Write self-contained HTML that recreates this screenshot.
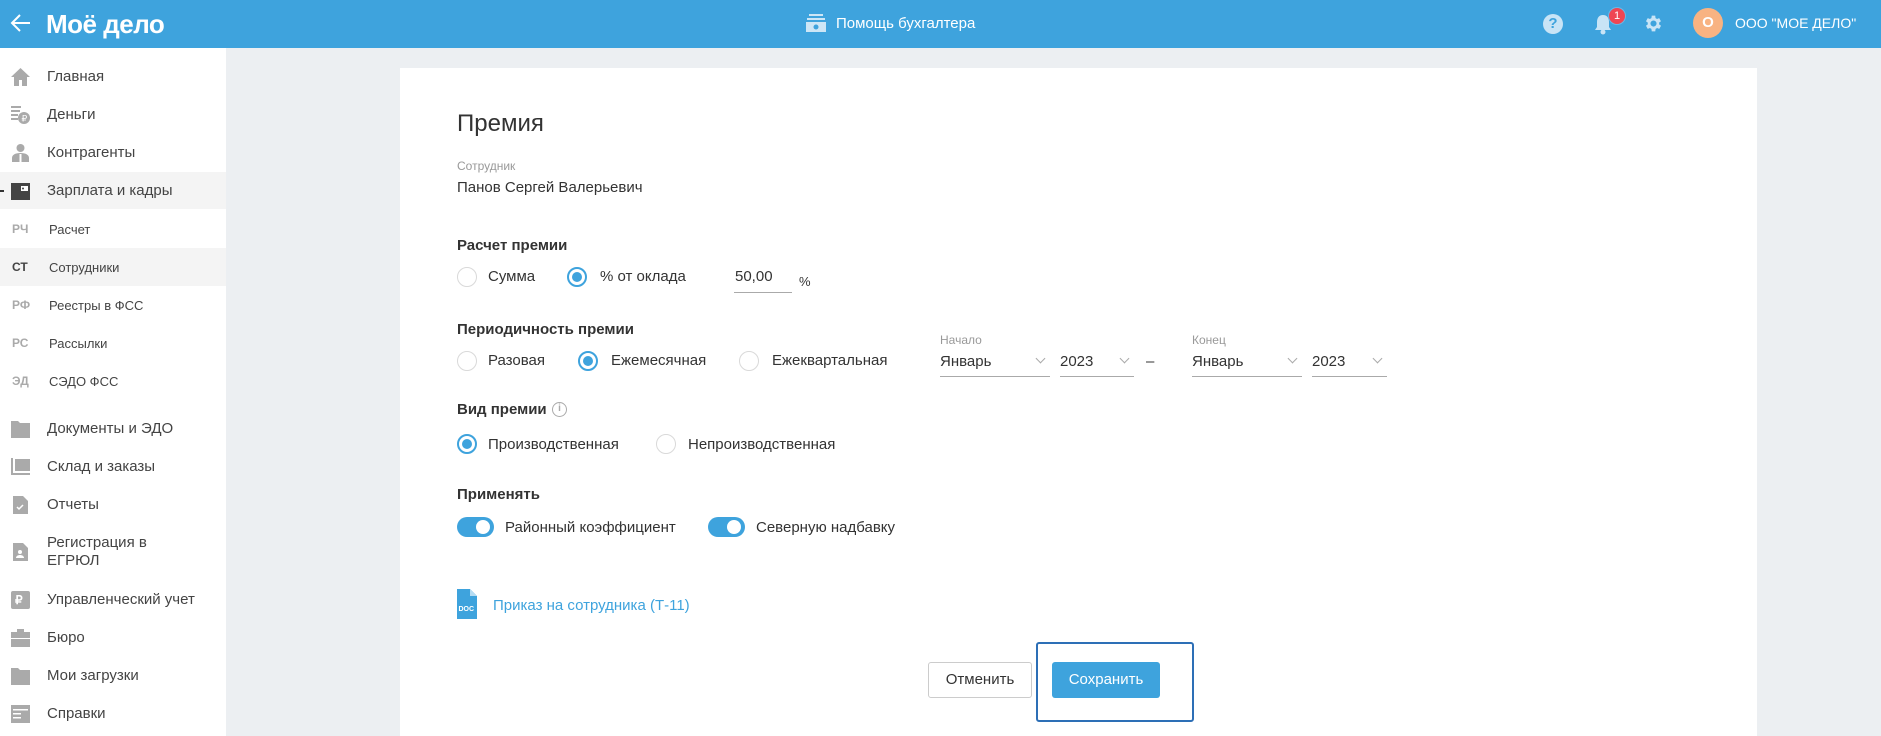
<!DOCTYPE html>
<html><head><meta charset="utf-8"><style>
*{margin:0;padding:0;box-sizing:border-box}
html,body{width:1881px;height:736px;overflow:hidden}
body{background:#eceff2;font-family:"Liberation Sans",sans-serif;color:#333;position:relative}
.hdr{position:absolute;left:0;top:0;width:1881px;height:48px;background:#3ea3dd;color:#fff}
.abs{position:absolute}
.side{position:absolute;left:0;top:48px;width:226px;height:688px;background:#fff}
.it{position:absolute;left:47px;font-size:15px;color:#444;line-height:18px}
.ic{position:absolute;left:10px;width:21px;height:20px}
.sub{position:absolute;left:12px;font-size:12px;font-weight:bold;color:#aaa}
.subt{position:absolute;left:49px;font-size:13px;color:#444}
.card{position:absolute;left:400px;top:68px;width:1357px;height:668px;background:#fff}
.t{position:absolute;white-space:nowrap;line-height:1}
.rad{position:absolute;width:20px;height:20px;border-radius:50%;border:1px solid #d9d9d9;background:#fff}
.rad.on{border:2px solid #3ea3dd}
.rad.on:after{content:"";position:absolute;left:3px;top:3px;width:10px;height:10px;border-radius:50%;background:#3ea3dd}
.b{font-weight:bold;font-size:15px;color:#333}
.f{font-size:15px;color:#333}
.sel{position:absolute;height:30px;border-bottom:1px solid #aaa;font-size:15px;color:#333}
.sel span{position:absolute;left:0;top:6px}
.sel i{position:absolute;right:6px;top:8px;width:7px;height:7px;border-right:1.5px solid #aaa;border-bottom:1.5px solid #aaa;transform:rotate(45deg)}
.tg{position:absolute;width:37px;height:20px;border-radius:10px;background:#3ea3dd}
.tg:after{content:"";position:absolute;right:4px;top:3px;width:14px;height:14px;border-radius:50%;background:#fff}
</style></head><body>
<div class="hdr">
 <svg class="abs" style="left:10px;top:13px" width="22" height="20" viewBox="0 0 22 20"><path d="M20 10H2M10 2L2 10l8 8" stroke="#fff" stroke-width="2" fill="none"/></svg>
 <div class="t" style="left:46px;top:11px;font-size:26px;font-weight:bold;letter-spacing:-0.5px">Моё дело</div>
 <svg class="abs" style="left:806px;top:14px" width="20" height="18" viewBox="0 0 20 18"><rect x="3" y="0" width="14" height="2" fill="#cde6f6"/><rect x="1" y="4" width="18" height="2" fill="#cde6f6"/><rect x="0" y="8" width="20" height="10" fill="#cde6f6"/><circle cx="10" cy="13" r="2.5" fill="#3ea3dd"/></svg>
 <div class="t" style="left:836px;top:16px;font-size:15px">Помощь бухгалтера</div>
 <div class="abs" style="left:1543px;top:14px;width:20px;height:20px;border-radius:50%;background:#c8e4f6;color:#3ea3dd;font-weight:bold;font-size:15px;text-align:center;line-height:20px">?</div>
 <svg class="abs" style="left:1594px;top:13px" width="18" height="22" viewBox="0 0 18 22"><path d="M9 2c-4 0-6 3-6 7v5l-2 3h16l-2-3V9c0-4-2-7-6-7z" fill="#c8e4f6"/><circle cx="9" cy="19" r="2.5" fill="#c8e4f6"/></svg>
 <div class="abs" style="left:1609px;top:8px;width:16px;height:16px;border-radius:50%;background:#ef4653;font-size:11px;text-align:center;line-height:16px;box-shadow:0 0 0 1px #6ab8e6">1</div>
 <svg class="abs" style="left:1643px;top:13px" width="21" height="21" viewBox="0 0 24 24"><path fill="#c8e4f6" d="M19.4 13a7.5 7.5 0 000-2l2.1-1.6-2-3.5-2.5 1a7 7 0 00-1.7-1L15 3h-4l-.4 2.9a7 7 0 00-1.7 1l-2.5-1-2 3.5L6.5 11a7.5 7.5 0 000 2l-2.1 1.6 2 3.5 2.5-1a7 7 0 001.7 1L11 21h4l.4-2.9a7 7 0 001.7-1l2.5 1 2-3.5zM13 15.5a3.5 3.5 0 110-7 3.5 3.5 0 010 7z" transform="translate(-1 0)"/></svg>
 <div class="abs" style="left:1693px;top:8px;width:30px;height:30px;border-radius:50%;background:#f8b382;font-weight:bold;font-size:15px;text-align:center;line-height:30px">О</div>
 <div class="t" style="left:1735px;top:16px;font-size:14px">ООО "МОЕ ДЕЛО"</div>
</div>
<div class="side">
 <div class="abs" style="left:0;top:124px;width:226px;height:37px;background:#f4f4f4"></div>
 <div class="abs" style="left:0;top:200px;width:226px;height:38px;background:#f4f4f4"></div>
 <div class="abs" style="left:0;top:142px;width:4px;height:1.5px;background:#333"></div>
 <svg class="ic" style="top:19px" viewBox="0 0 21 20"><path d="M10.5 1L1 10h3v9h5v-6h3v6h5v-9h3z" fill="#aaa"/></svg>
 <svg class="ic" style="top:57px" viewBox="0 0 21 20"><rect x="1" y="1" width="10" height="2" fill="#aaa"/><rect x="1" y="5" width="9" height="2" fill="#aaa"/><rect x="1" y="9" width="7" height="2" fill="#aaa"/><rect x="1" y="13" width="7" height="2" fill="#aaa"/><circle cx="14" cy="13" r="6" fill="#aaa"/><text x="11.5" y="16.5" font-size="9" fill="#fff" font-family="Liberation Sans">₽</text></svg>
 <svg class="ic" style="top:95px" viewBox="0 0 21 20"><circle cx="10.5" cy="5" r="4" fill="#aaa"/><path d="M2 19v-4c0-3 3-5 8.5-5s8.5 2 8.5 5v4z" fill="#aaa"/><rect x="9.5" y="11" width="2" height="8" fill="#fff"/></svg>
 <svg class="ic" style="top:133px" viewBox="0 0 21 20"><rect x="1" y="2" width="19" height="17" fill="#444"/><rect x="11" y="5" width="7" height="5" fill="#fff"/><circle cx="13" cy="7.5" r="1" fill="#444"/></svg>
 <svg class="ic" style="top:371px" viewBox="0 0 21 20"><path d="M1 2h7l2 2h10v15H1z" fill="#aaa"/></svg>
 <svg class="ic" style="top:409px" viewBox="0 0 21 20"><path d="M1 1h2v15h17v2H1z" fill="#aaa"/><rect x="5" y="2" width="15" height="12" fill="#aaa"/></svg>
 <svg class="ic" style="top:447px" viewBox="0 0 21 20"><path d="M3 1h10l5 5v13H3z" fill="#aaa"/><path d="M7 12l2 2 4-4" stroke="#fff" stroke-width="1.5" fill="none"/></svg>
 <svg class="ic" style="top:494px" viewBox="0 0 21 20"><path d="M3 1h10l5 5v13H3z" fill="#aaa"/><circle cx="10" cy="10" r="2" fill="#fff"/><path d="M6 16c0-2 2-3 4-3s4 1 4 3z" fill="#fff"/></svg>
 <svg class="ic" style="top:542px" viewBox="0 0 21 20"><rect x="1" y="1" width="19" height="18" rx="2" fill="#aaa"/><text x="5" y="14" font-size="12" font-weight="bold" fill="#fff" font-family="Liberation Sans">₽</text></svg>
 <svg class="ic" style="top:580px" viewBox="0 0 21 20"><rect x="7" y="1" width="7" height="3" fill="#aaa"/><rect x="1" y="4" width="19" height="6" fill="#aaa"/><rect x="1" y="11" width="19" height="8" fill="#aaa"/></svg>
 <svg class="ic" style="top:618px" viewBox="0 0 21 20"><path d="M1 2h7l2 2h10v15H1z" fill="#aaa"/></svg>
 <svg class="ic" style="top:656px" viewBox="0 0 21 20"><rect x="1" y="1" width="19" height="18" fill="#aaa"/><rect x="3" y="5" width="15" height="1.5" fill="#fff"/><rect x="3" y="9" width="8" height="1.5" fill="#fff"/><rect x="3" y="13" width="8" height="1.5" fill="#fff"/></svg>
 <div class="it" style="top:20px">Главная</div>
 <div class="it" style="top:58px">Деньги</div>
 <div class="it" style="top:96px">Контрагенты</div>
 <div class="it" style="top:134px">Зарплата и кадры</div>
 <div class="sub" style="top:174px">РЧ</div><div class="subt" style="top:174px">Расчет</div>
 <div class="sub" style="top:212px;color:#444">СТ</div><div class="subt" style="top:212px">Сотрудники</div>
 <div class="sub" style="top:250px">РФ</div><div class="subt" style="top:250px">Реестры в ФСС</div>
 <div class="sub" style="top:288px">РС</div><div class="subt" style="top:288px">Рассылки</div>
 <div class="sub" style="top:326px">ЭД</div><div class="subt" style="top:326px">СЭДО ФСС</div>
 <div class="it" style="top:372px">Документы и ЭДО</div>
 <div class="it" style="top:410px">Склад и заказы</div>
 <div class="it" style="top:448px">Отчеты</div>
 <div class="it" style="top:486px">Регистрация в<br>ЕГРЮЛ</div>
 <div class="it" style="top:543px">Управленческий учет</div>
 <div class="it" style="top:581px">Бюро</div>
 <div class="it" style="top:619px">Мои загрузки</div>
 <div class="it" style="top:657px">Справки</div>
</div>
<div class="card"></div>
<div class="t" style="left:457px;top:112px;font-size:24px;color:#333">Премия</div>
<div class="t" style="left:457px;top:160px;font-size:12px;color:#999">Сотрудник</div>
<div class="t f" style="left:457px;top:180px">Панов Сергей Валерьевич</div>
<div class="t b" style="left:457px;top:238px">Расчет премии</div>
<div class="rad" style="left:457px;top:267px"></div><div class="t f" style="left:488px;top:269px">Сумма</div>
<div class="rad on" style="left:567px;top:267px"></div><div class="t f" style="left:600px;top:269px">% от оклада</div>
<div class="abs" style="left:734px;top:292px;width:58px;border-bottom:1px solid #aaa"></div>
<div class="t f" style="left:735px;top:269px">50,00</div><div class="t" style="left:799px;top:275px;font-size:13px">%</div>
<div class="t b" style="left:457px;top:322px">Периодичность премии</div>
<div class="rad" style="left:457px;top:351px"></div><div class="t f" style="left:488px;top:353px">Разовая</div>
<div class="rad on" style="left:578px;top:351px"></div><div class="t f" style="left:611px;top:353px">Ежемесячная</div>
<div class="rad" style="left:739px;top:351px"></div><div class="t f" style="left:772px;top:353px">Ежеквартальная</div>
<div class="t" style="left:940px;top:334px;font-size:12px;color:#999">Начало</div>
<div class="t" style="left:1192px;top:334px;font-size:12px;color:#999">Конец</div>
<div class="sel" style="left:940px;top:347px;width:110px"><span>Январь</span><i></i></div>
<div class="sel" style="left:1060px;top:347px;width:74px"><span>2023</span><i></i></div>
<div class="t f" style="left:1146px;top:354px">–</div>
<div class="sel" style="left:1192px;top:347px;width:110px"><span>Январь</span><i></i></div>
<div class="sel" style="left:1312px;top:347px;width:75px"><span>2023</span><i></i></div>
<div class="t b" style="left:457px;top:402px">Вид премии</div>
<div class="abs" style="left:552px;top:402px;width:15px;height:15px;border-radius:50%;border:1.5px solid #aaa;color:#aaa;font-size:10px;text-align:center;line-height:12px;font-weight:bold">i</div>
<div class="rad on" style="left:457px;top:434px"></div><div class="t f" style="left:488px;top:437px">Производственная</div>
<div class="rad" style="left:656px;top:434px"></div><div class="t f" style="left:688px;top:437px">Непроизводственная</div>
<div class="t b" style="left:457px;top:487px">Применять</div>
<div class="tg" style="left:457px;top:517px"></div><div class="t f" style="left:505px;top:520px">Районный коэффициент</div>
<div class="tg" style="left:708px;top:517px"></div><div class="t f" style="left:756px;top:520px">Северную надбавку</div>
<svg class="abs" style="left:457px;top:589px" width="20" height="30" viewBox="0 0 20 30"><path d="M0 0h13l7 7v23H0z" fill="#3ea3dd"/><path d="M13 0v7h7z" fill="#b5dcf3"/><text x="1.5" y="22" font-size="7" font-weight="bold" fill="#fff" font-family="Liberation Sans">DOC</text></svg>
<div class="t" style="left:493px;top:598px;font-size:15px;color:#3ea3dd">Приказ на сотрудника (Т-11)</div>
<div class="abs" style="left:1036px;top:642px;width:158px;height:80px;border:2px solid #2d6fb6;border-radius:3px"></div>
<div class="abs" style="left:928px;top:662px;width:104px;height:36px;border:1px solid #ccc;border-radius:3px;background:#fff;font-size:15px;text-align:center;line-height:34px;color:#333">Отменить</div>
<div class="abs" style="left:1052px;top:662px;width:108px;height:36px;border-radius:3px;background:#3ea3dd;font-size:15px;text-align:center;line-height:36px;color:#fff">Сохранить</div>
</body></html>
